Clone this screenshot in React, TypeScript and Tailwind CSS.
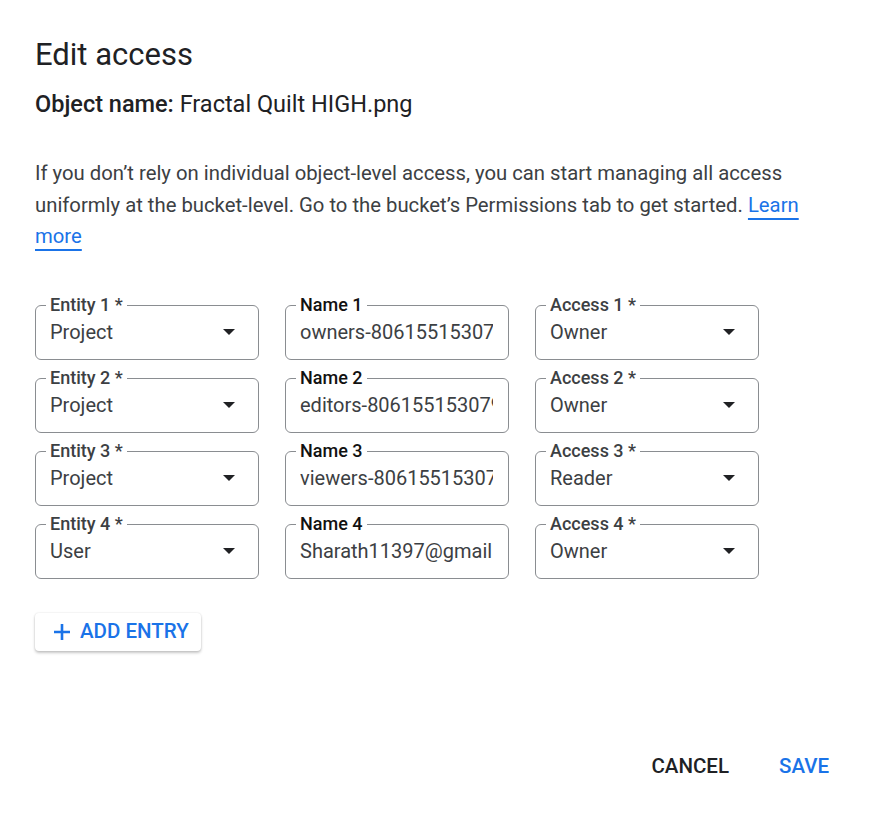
import React from 'react';

const font = { fontFamily: 'Roboto, "Noto Sans", Arial, sans-serif' };

interface Row {
  entity: string;
  name: string;
  access: string;
}

const rows: Row[] = [
  { entity: 'Project', name: 'owners-806155153079', access: 'Owner' },
  { entity: 'Project', name: 'editors-806155153079', access: 'Owner' },
  { entity: 'Project', name: 'viewers-806155153079', access: 'Reader' },
  { entity: 'User', name: 'Sharath11397@gmail.com', access: 'Owner' },
];

const Arrow = () => (
  <svg width="12" height="6" viewBox="0 0 12 6" className="shrink-0">
    <path d="M0 0h12L6 6z" fill="#202124" />
  </svg>
);

const Outlined: React.FC<{ label: string; strong?: boolean; children: React.ReactNode }> = ({ label, strong, children }) => (
  <div className="relative h-[55px] rounded-[6px] border border-[#8a8d91]">
    <span
      className={`absolute -top-[12px] left-[10px] bg-white px-[4px] text-[18px] leading-[22px] font-medium ${
        strong ? 'text-[#111]' : 'text-[#3c4043]'
      }`}
    >
      {label}
    </span>
    <div className="flex h-full items-center pl-[14px] pr-[23px]">{children}</div>
  </div>
);

export default function App() {
  return (
    <div className="min-h-screen bg-white" style={font}>
      <div className="pl-[35px] pr-[36px] pt-[37px]">
        <h1 className="text-[31px] leading-[36px] text-[#202124]">Edit access</h1>
        <p className="mt-[17px] text-[23.5px] leading-[28px] text-[#202124]">
          <span className="font-medium">Object name:</span> Fractal Quilt HIGH.png
        </p>
        <p className="mt-[40px] w-[778px] text-[20.3px] leading-[31.5px] text-[#3c4043]">
          If you don’t rely on individual object-level access, you can start managing all access uniformly at the
          bucket-level. Go to the bucket’s Permissions tab to get started.{' '}
          <a className="text-[#1a73e8] underline decoration-[#1a73e8] underline-offset-[6px]">Learn more</a>
        </p>

        <div className="mt-[52px] grid w-[724px] grid-cols-3 gap-x-[26px] gap-y-[18px]">
          {rows.map((r, i) => (
            <React.Fragment key={i}>
              <Outlined label={`Entity ${i + 1} *`}>
                <span className="flex-1 text-[20px] text-[#3c4043]">{r.entity}</span>
                <Arrow />
              </Outlined>
              <Outlined label={`Name ${i + 1}`} strong>
                <div className="-mr-[8px] flex-1 overflow-hidden whitespace-nowrap text-[20px] text-[#3c4043]">
                  {r.name}
                </div>
              </Outlined>
              <Outlined label={`Access ${i + 1} *`}>
                <span className="flex-1 text-[20px] text-[#3c4043]">{r.access}</span>
                <Arrow />
              </Outlined>
            </React.Fragment>
          ))}
        </div>

        <button className="mt-[34px] flex h-[38px] w-[166px] items-center gap-[8px] rounded-[4px] bg-white pl-[17px] text-[20.5px] font-medium text-[#1a73e8] shadow-[0_2px_3px_rgba(0,0,0,0.22),0_0_2px_rgba(0,0,0,0.12)]">
          <svg width="20" height="20" viewBox="0 0 20 20">
            <path d="M10 2v16M2 10h16" stroke="#1a73e8" strokeWidth="2.6" />
          </svg>
          ADD ENTRY
        </button>

        <div className="mt-[100px] flex justify-end gap-[50px] pr-[8px] text-[20.5px] font-medium">
          <button className="text-[#202124]">CANCEL</button>
          <button className="text-[#1a73e8]">SAVE</button>
        </div>
      </div>
    </div>
  );
}
